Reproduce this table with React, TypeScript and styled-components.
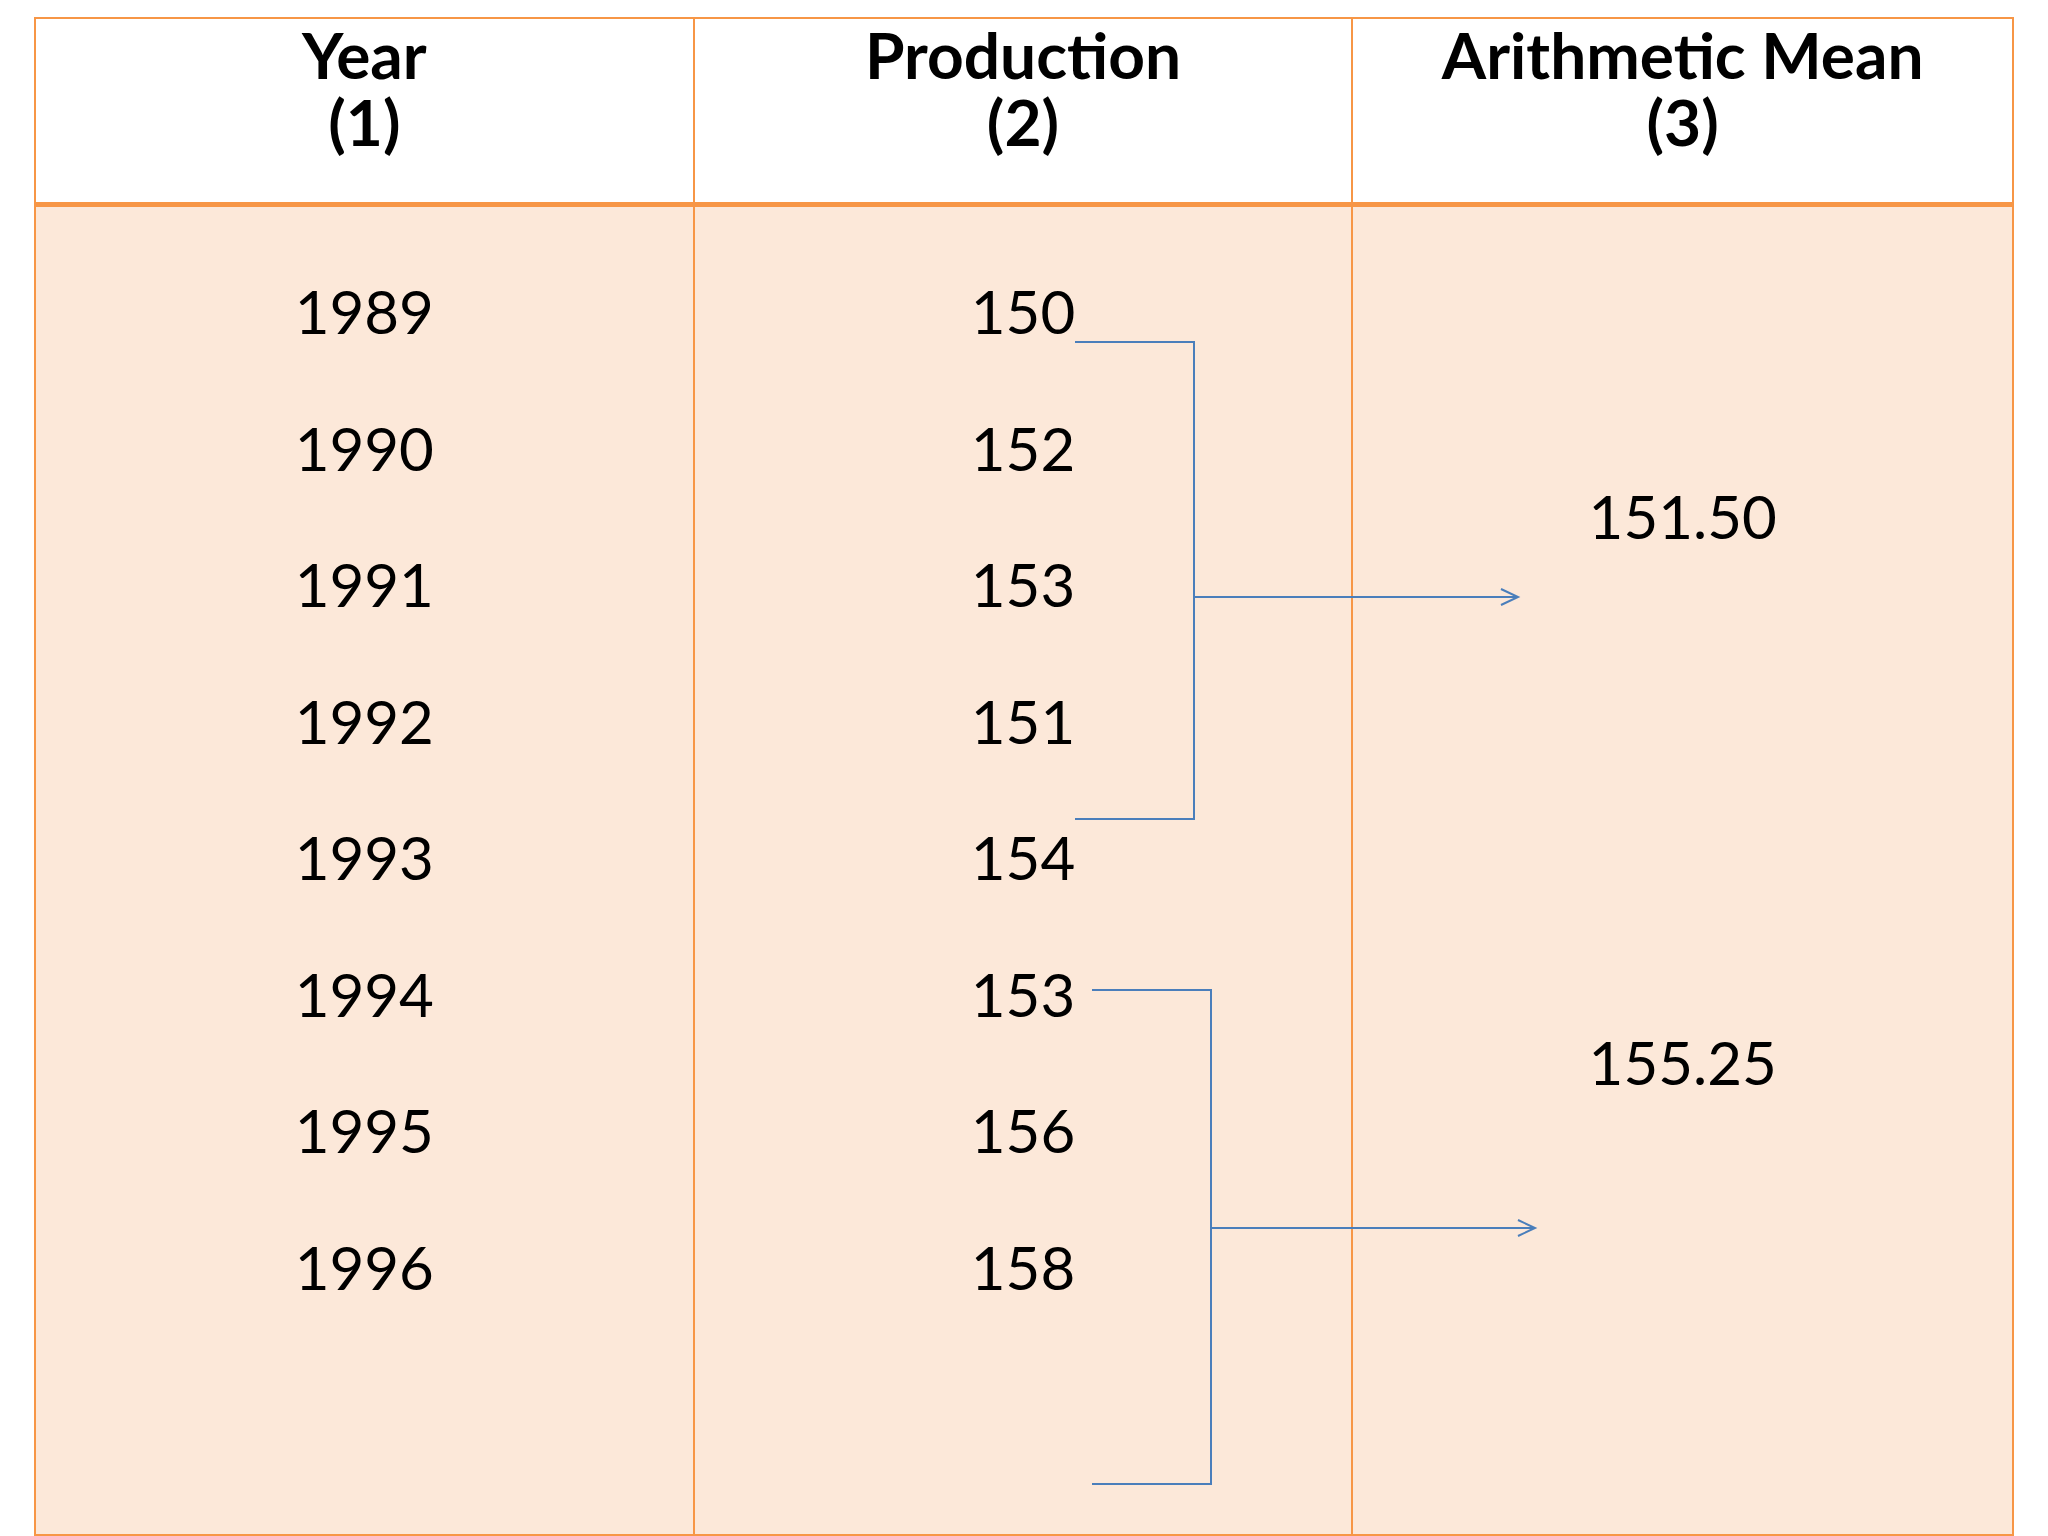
import styled, { createGlobalStyle } from "styled-components";

const GlobalStyle = createGlobalStyle`
  html, body {
    margin: 0;
    padding: 0;
    background: #ffffff;
  }
  body {
    font-family: Lato, "Open Sans", sans-serif;
    color: #000000;
  }
`;

const ORANGE = "#f79646";
const ROW = 136.5;

const Page = styled.div`
  padding: 17px 0 0 34px;
`;

const Table = styled.div`
  position: relative;
  box-sizing: border-box;
  width: 1980px;
  height: 1519px;
  border: 2.5px solid ${ORANGE};
  display: flex;
  flex-direction: column;
`;

const HeaderRow = styled.div`
  display: grid;
  grid-template-columns: repeat(3, 1fr);
  height: 188px;
  background: #ffffff;
  border-bottom: 5px solid ${ORANGE};
  box-sizing: border-box;
`;

const HeaderCell = styled.div<{ $last?: boolean }>`
  border-right: ${(p) => (p.$last ? "none" : `2px solid ${ORANGE}`)};
  text-align: center;
  font-weight: 700;
  font-size: 64px;
  line-height: 67px;
  padding-top: 2px;
`;

const Body = styled.div`
  flex: 1;
  display: grid;
  grid-template-columns: repeat(3, 1fr);
  background: #fce8d9;
`;

const Column = styled.div<{ $last?: boolean }>`
  border-right: ${(p) => (p.$last ? "none" : `2px solid ${ORANGE}`)};
  display: grid;
  grid-template-rows: repeat(8, ${ROW}px);
  padding-top: 36px;
  align-content: start;
`;

const Cell = styled.div<{ $row?: number; $span?: number }>`
  display: flex;
  align-items: center;
  justify-content: center;
  font-size: 60px;
  grid-row: ${(p) => (p.$row ? `${p.$row} / span ${p.$span ?? 1}` : "auto")};
`;

const Connectors = styled.svg`
  position: absolute;
  left: -2.5px;
  top: -2.5px;
  width: 1980px;
  height: 1519px;
  pointer-events: none;
`;

const years = ["1989", "1990", "1991", "1992", "1993", "1994", "1995", "1996"];
const production = ["150", "152", "153", "151", "154", "153", "156", "158"];

type Bracket = { x1: number; x2: number; top: number; bottom: number; arrowY: number; arrowX: number };

const brackets: Bracket[] = [
  { x1: 1041, x2: 1160, top: 325, bottom: 802, arrowY: 580, arrowX: 1484 },
  { x1: 1058, x2: 1177, top: 973, bottom: 1467, arrowY: 1211, arrowX: 1501 },
];

export default function App() {
  return (
    <Page>
      <GlobalStyle />
      <Table>
        <HeaderRow>
          <HeaderCell>
            Year
            <br />
            (1)
          </HeaderCell>
          <HeaderCell>
            Production
            <br />
            (2)
          </HeaderCell>
          <HeaderCell $last>
            Arithmetic Mean
            <br />
            (3)
          </HeaderCell>
        </HeaderRow>
        <Body>
          <Column>
            {years.map((y) => (
              <Cell key={y}>{y}</Cell>
            ))}
          </Column>
          <Column>
            {production.map((v, i) => (
              <Cell key={i}>{v}</Cell>
            ))}
          </Column>
          <Column $last>
            <Cell $row={2} $span={2}>151.50</Cell>
            <Cell $row={6} $span={2}>155.25</Cell>
          </Column>
        </Body>
        <Connectors viewBox="0 0 1980 1519">
          {brackets.map((b, i) => (
            <g key={i} fill="none" stroke="#4a7ebb" strokeWidth={2}>
              <polyline points={`${b.x1},${b.top} ${b.x2},${b.top} ${b.x2},${b.bottom} ${b.x1},${b.bottom}`} />
              <line x1={b.x2} y1={b.arrowY} x2={b.arrowX} y2={b.arrowY} />
              <polyline points={`${b.arrowX - 17},${b.arrowY - 8} ${b.arrowX},${b.arrowY} ${b.arrowX - 17},${b.arrowY + 8}`} />
            </g>
          ))}
        </Connectors>
      </Table>
    </Page>
  );
}
